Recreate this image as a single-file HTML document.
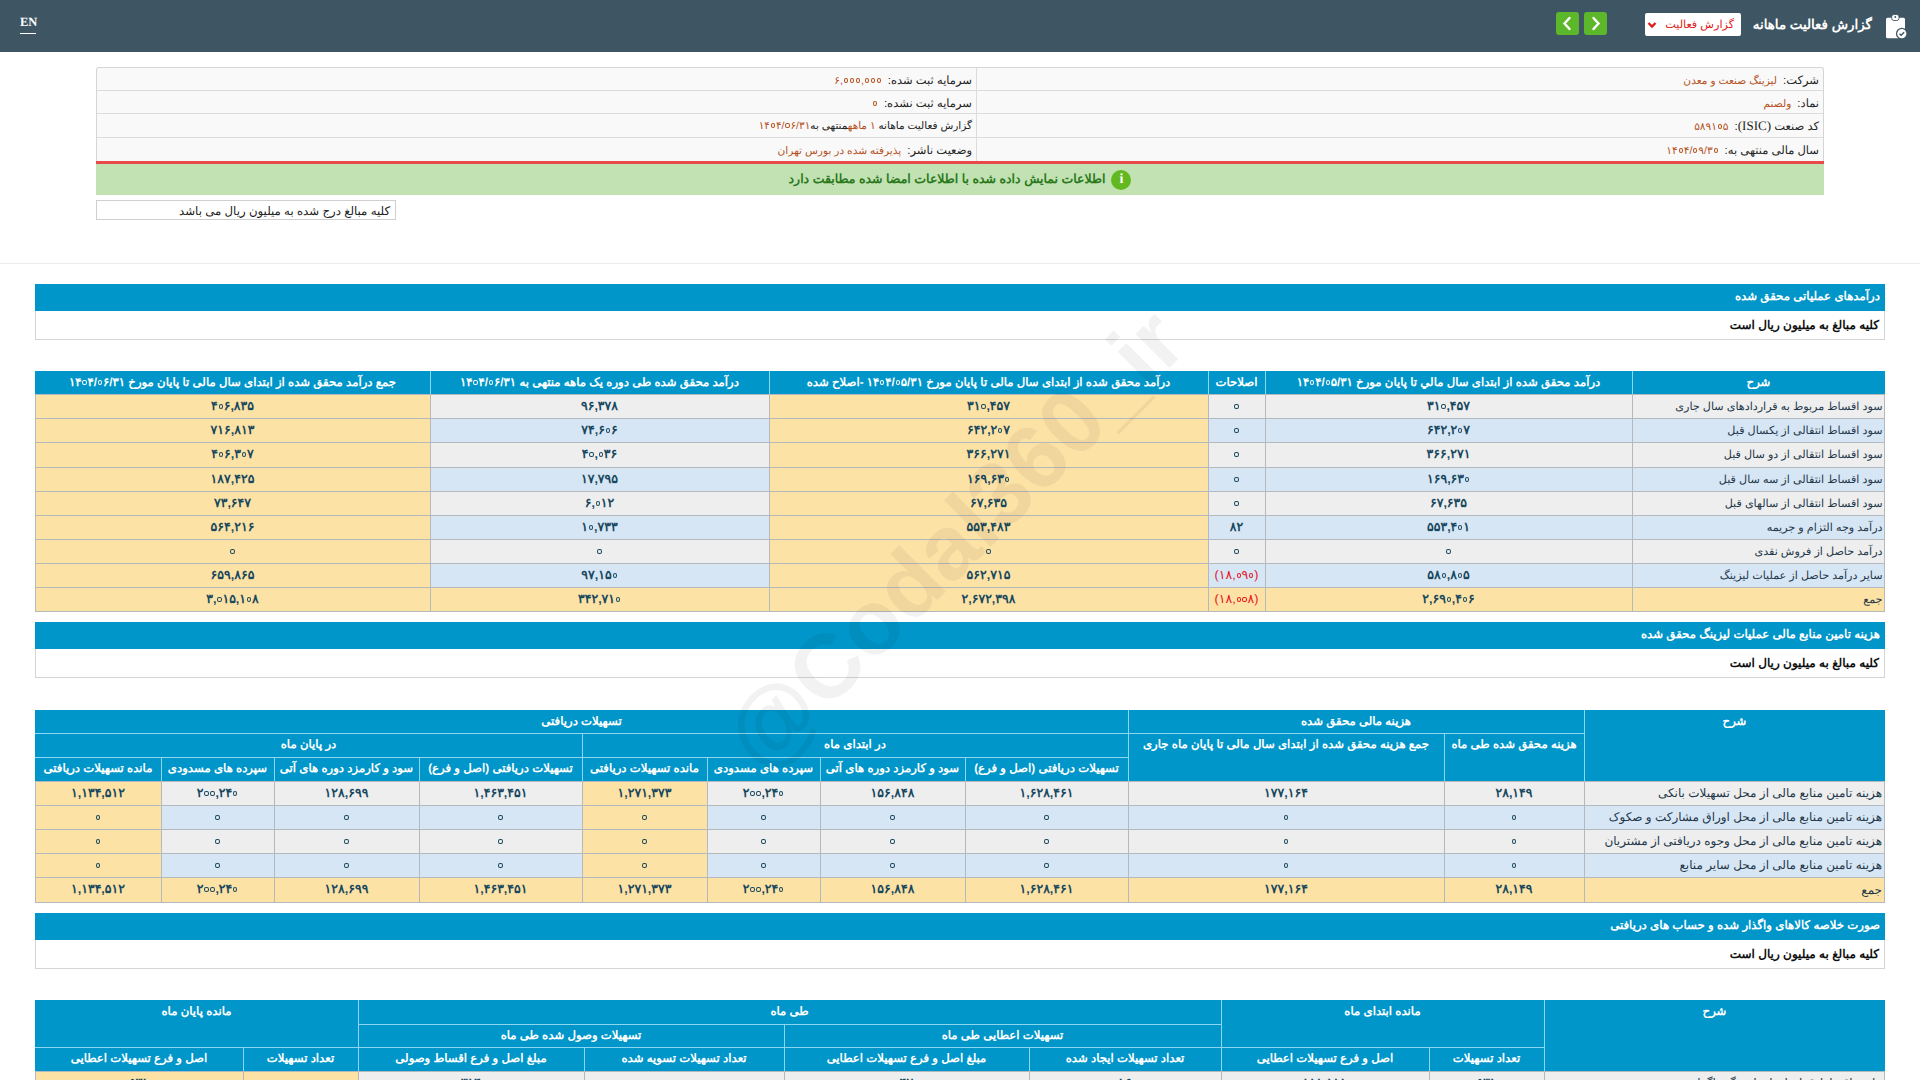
<!DOCTYPE html>
<html lang="fa"><head><meta charset="utf-8"><title>گزارش فعالیت ماهانه</title>
<style>
html,body{margin:0;padding:0;background:#fff;width:1920px;height:1080px;overflow:hidden}
body{position:relative;font-family:"Liberation Sans", sans-serif;}
div{font-family:"Liberation Sans", sans-serif}
*{text-rendering:geometricPrecision}
i.z{display:inline-block;width:4.2px;height:4.6px;border:1.5px solid currentColor;border-radius:50%;box-sizing:border-box;margin:0 0.9px;vertical-align:1.5px}
</style></head><body>
<div style="position:absolute;left:0px;top:0px;width:1920px;height:52px;background:#3e5563"></div>
<div style="position:absolute;left:20px;top:14px;font-family:'Liberation Serif',serif;font-size:12.5px;font-weight:bold;color:#fff;line-height:16px">EN</div>
<div style="position:absolute;left:20px;top:33px;width:16px;height:1px;background:#fff"></div>
<div dir="rtl" style="position:absolute;right:48px;top:14px;font-size:13.4px;font-weight:bold;color:#fff;line-height:22px;white-space:nowrap">گزارش فعالیت ماهانه</div>
<svg style="position:absolute;left:1876px;top:8px" width="40" height="36" viewBox="0 0 40 36">
<rect x="10" y="9.7" width="19" height="20.5" rx="1.5" fill="#fff"/>
<rect x="15.7" y="6.5" width="7.3" height="6" rx="2.2" fill="#fff" stroke="#3e5563" stroke-width="0.9"/><circle cx="19.3" cy="9" r="0.9" fill="#3e5563"/>
<circle cx="25.8" cy="25.7" r="5.9" fill="#3e5563"/><circle cx="25.8" cy="25.7" r="4.6" fill="#fff"/>
<path d="M23.6 25.9 L25.2 27.3 L28.1 24.3" stroke="#3e5563" stroke-width="1.5" fill="none"/>
</svg>
<div style="position:absolute;left:1645px;top:13px;width:96px;height:23px;background:#fff;border-radius:2px"></div>
<div dir="rtl" style="position:absolute;right:186px;top:14px;font-size:11.2px;color:#e01b1b;line-height:23px;white-space:nowrap">گزارش فعالیت</div>
<svg style="position:absolute;left:1647px;top:20px" width="10" height="9" viewBox="0 0 10 9"><path d="M1.5 3 L5 6.5 L8.5 3" stroke="#e01b1b" stroke-width="2.3" fill="none"/></svg>
<div style="position:absolute;left:1556px;top:12px;width:23px;height:23px;background:#5cb82a;border-radius:3px"></div>
<div style="position:absolute;left:1584px;top:12px;width:23px;height:23px;background:#5cb82a;border-radius:3px"></div>
<svg style="position:absolute;left:1556px;top:12px" width="23" height="23" viewBox="0 0 23 23"><path d="M13.5 6 L8.5 11.5 L13.5 17" stroke="#fff" stroke-width="2.4" fill="none" stroke-linecap="round"/></svg>
<svg style="position:absolute;left:1584px;top:12px" width="23" height="23" viewBox="0 0 23 23"><path d="M9.5 6 L14.5 11.5 L9.5 17" stroke="#fff" stroke-width="2.4" fill="none" stroke-linecap="round"/></svg>
<div style="position:absolute;left:96px;top:67px;width:1728px;height:94px;background:#f9f9f9;border:1px solid #d5d5d5;border-bottom:none;box-sizing:border-box;border-radius:3px 3px 0 0"></div>
<div style="position:absolute;left:97px;top:90px;width:1726px;height:1px;background:#dcdcdc"></div>
<div style="position:absolute;left:97px;top:113px;width:1726px;height:1px;background:#dcdcdc"></div>
<div style="position:absolute;left:97px;top:137px;width:1726px;height:1px;background:#dcdcdc"></div>
<div style="position:absolute;left:976px;top:68px;width:1px;height:93px;background:#dcdcdc"></div>
<div dir="rtl" style="position:absolute;right:101px;top:68px;line-height:24px;white-space:nowrap;color:#222"><span style="font-size:11.5px">شرکت:</span><span style="color:#b5501b;font-size:10.6px;margin-right:6px">لیزینگ صنعت و معدن</span></div>
<div dir="rtl" style="position:absolute;right:101px;top:91px;line-height:24px;white-space:nowrap;color:#222"><span style="font-size:11.5px">نماد:</span><span style="color:#b5501b;font-size:10.6px;margin-right:6px">ولصنم</span></div>
<div dir="rtl" style="position:absolute;right:101px;top:114px;line-height:24px;white-space:nowrap;color:#222"><span style="font-size:11.5px">کد صنعت <span style="font-family:Liberation Serif,serif;font-size:13px">(ISIC)</span>:</span><span style="color:#b5501b;font-size:10.6px;margin-right:6px"><bdi dir="ltr">۵۸۹۱<i class="z"></i>۵</bdi></span></div>
<div dir="rtl" style="position:absolute;right:101px;top:138px;line-height:24px;white-space:nowrap;color:#222"><span style="font-size:11.5px">سال مالی منتهی به:</span><span style="color:#b5501b;font-size:10.6px;margin-right:6px"><bdi dir="ltr">۱۴<i class="z"></i>۴/<i class="z"></i>۹/۳<i class="z"></i></bdi></span></div>
<div dir="rtl" style="position:absolute;right:948px;top:68px;line-height:24px;white-space:nowrap;color:#222"><span style="font-size:11.5px">سرمایه ثبت شده:</span><span style="color:#b5501b;font-size:10.6px;margin-right:6px"><bdi dir="ltr">۶,<i class="z"></i><i class="z"></i><i class="z"></i>,<i class="z"></i><i class="z"></i><i class="z"></i></bdi></span></div>
<div dir="rtl" style="position:absolute;right:948px;top:91px;line-height:24px;white-space:nowrap;color:#222"><span style="font-size:11.5px">سرمایه ثبت نشده:</span><span style="color:#b5501b;font-size:10.6px;margin-right:6px"><bdi dir="ltr"><i class="z"></i></bdi></span></div>
<div dir="rtl" style="position:absolute;right:948px;top:114px;line-height:24px;font-size:10.5px;white-space:nowrap;color:#222"><span>گزارش فعالیت ماهانه </span><span style="color:#b5501b">۱ ماهه</span><span>منتهی به</span><span style="color:#b5501b"><bdi dir="ltr">۱۴<i class="z"></i>۴/<i class="z"></i>۶/۳۱</bdi></span></div>
<div dir="rtl" style="position:absolute;right:948px;top:138px;line-height:24px;white-space:nowrap;color:#222"><span style="font-size:11.5px">وضعیت ناشر:</span><span style="color:#b5501b;font-size:10.6px;margin-right:6px">پذیرفته شده در بورس تهران</span></div>
<div style="position:absolute;left:96px;top:161px;width:1728px;height:3px;background:#e84a4a"></div>
<div style="position:absolute;left:96px;top:164px;width:1728px;height:31px;background:#c3e2b4"></div>
<div dir="rtl" style="position:absolute;left:0;width:1920px;top:164px;text-align:center;line-height:30px;font-size:12.5px;font-weight:bold;color:#2a7a1c;white-space:nowrap"><span style="display:inline-block;width:20px;height:20px;border-radius:50%;background:#62b81f;color:#fff;font-weight:bold;font-size:14px;line-height:20px;vertical-align:middle;margin-left:6px;font-family:'Liberation Serif',serif">i</span>اطلاعات نمایش داده شده با اطلاعات امضا شده مطابقت دارد</div>
<div style="position:absolute;left:96px;top:200px;width:300px;height:20px;background:#fff;border:1px solid #cfcfcf;box-sizing:border-box"></div>
<div dir="rtl" style="position:absolute;right:1530px;top:202px;line-height:19px;font-size:11.75px;color:#222;white-space:nowrap">کلیه مبالغ درج شده به میلیون ریال می باشد</div>
<div style="position:absolute;left:0px;top:263px;width:1920px;height:1px;background:#ececec"></div>
<div style="position:absolute;left:35px;top:284px;width:1850px;height:27px;background:#0096c9"></div>
<div dir="rtl" style="position:absolute;right:40px;top:283px;line-height:27px;font-size:11.75px;font-weight:bold;color:#fff;white-space:nowrap">درآمدهای عملیاتی محقق شده</div>
<div style="position:absolute;left:35px;top:311px;width:1850px;height:29px;background:#fff;border:1px solid #d5d5d5;border-top:none;box-sizing:border-box"></div>
<div dir="rtl" style="position:absolute;right:41px;top:311px;line-height:29px;font-size:12px;font-weight:bold;color:#111;white-space:nowrap">کلیه مبالغ به میلیون ریال است</div>
<div style="position:absolute;left:35px;top:622px;width:1850px;height:27px;background:#0096c9"></div>
<div dir="rtl" style="position:absolute;right:40px;top:621px;line-height:27px;font-size:11.75px;font-weight:bold;color:#fff;white-space:nowrap">هزینه تامین منابع مالی عملیات لیزینگ محقق شده</div>
<div style="position:absolute;left:35px;top:649px;width:1850px;height:29px;background:#fff;border:1px solid #d5d5d5;border-top:none;box-sizing:border-box"></div>
<div dir="rtl" style="position:absolute;right:41px;top:649px;line-height:29px;font-size:12px;font-weight:bold;color:#111;white-space:nowrap">کلیه مبالغ به میلیون ریال است</div>
<div style="position:absolute;left:35px;top:913px;width:1850px;height:27px;background:#0096c9"></div>
<div dir="rtl" style="position:absolute;right:40px;top:912px;line-height:27px;font-size:11.75px;font-weight:bold;color:#fff;white-space:nowrap">صورت خلاصه کالاهای واگذار شده و حساب های دریافتی</div>
<div style="position:absolute;left:35px;top:940px;width:1850px;height:29px;background:#fff;border:1px solid #d5d5d5;border-top:none;box-sizing:border-box"></div>
<div dir="rtl" style="position:absolute;right:41px;top:940px;line-height:29px;font-size:12px;font-weight:bold;color:#111;white-space:nowrap">کلیه مبالغ به میلیون ریال است</div>
<div style="position:absolute;left:35px;top:371px;width:395px;height:23px;background:#0096c9;text-align:center;box-sizing:border-box;line-height:23px;font-size:11.7px;font-weight:bold;color:#fff;white-space:nowrap;overflow:hidden;direction:rtl">جمع درآمد محقق شده از ابتدای سال مالی تا پایان مورخ <bdi dir="ltr">۱۴<i class="z"></i>۴/<i class="z"></i>۶/۳۱</bdi></div>
<div style="position:absolute;left:430px;top:371px;width:339px;height:23px;background:#0096c9;text-align:center;box-sizing:border-box;line-height:23px;font-size:11.7px;font-weight:bold;color:#fff;white-space:nowrap;overflow:hidden;direction:rtl">درآمد محقق شده طی دوره یک ماهه منتهی به <bdi dir="ltr">۱۴<i class="z"></i>۴/<i class="z"></i>۶/۳۱</bdi></div>
<div style="position:absolute;left:769px;top:371px;width:439px;height:23px;background:#0096c9;text-align:center;box-sizing:border-box;line-height:23px;font-size:11.7px;font-weight:bold;color:#fff;white-space:nowrap;overflow:hidden;direction:rtl">درآمد محقق شده از ابتدای سال مالی تا پایان مورخ <bdi dir="ltr">۱۴<i class="z"></i>۴/<i class="z"></i>۵/۳۱</bdi> -اصلاح شده</div>
<div style="position:absolute;left:1208px;top:371px;width:57px;height:23px;background:#0096c9;text-align:center;box-sizing:border-box;line-height:23px;font-size:11.7px;font-weight:bold;color:#fff;white-space:nowrap;overflow:hidden;direction:rtl">اصلاحات</div>
<div style="position:absolute;left:1265px;top:371px;width:367px;height:23px;background:#0096c9;text-align:center;box-sizing:border-box;line-height:23px;font-size:11.7px;font-weight:bold;color:#fff;white-space:nowrap;overflow:hidden;direction:rtl">درآمد محقق شده از ابتدای سال مالي تا پایان مورخ <bdi dir="ltr">۱۴<i class="z"></i>۴/<i class="z"></i>۵/۳۱</bdi></div>
<div style="position:absolute;left:1632px;top:371px;width:253px;height:23px;background:#0096c9;text-align:center;box-sizing:border-box;line-height:23px;font-size:11.7px;font-weight:bold;color:#fff;white-space:nowrap;overflow:hidden;direction:rtl">شرح</div>
<div style="position:absolute;left:35px;top:394px;width:395px;height:24px;background:#fde2a5;text-align:center;box-sizing:border-box;line-height:24px;font-size:12.5px;font-weight:bold;color:#18485e;white-space:nowrap;overflow:hidden;">۴<i class="z"></i>۶,۸۳۵</div>
<div style="position:absolute;left:430px;top:394px;width:339px;height:24px;background:#eeeeee;text-align:center;box-sizing:border-box;line-height:24px;font-size:12.5px;font-weight:bold;color:#18485e;white-space:nowrap;overflow:hidden;">۹۶,۳۷۸</div>
<div style="position:absolute;left:769px;top:394px;width:439px;height:24px;background:#fde2a5;text-align:center;box-sizing:border-box;line-height:24px;font-size:12.5px;font-weight:bold;color:#18485e;white-space:nowrap;overflow:hidden;">۳۱<i class="z"></i>,۴۵۷</div>
<div style="position:absolute;left:1208px;top:394px;width:57px;height:24px;background:#eeeeee;text-align:center;box-sizing:border-box;line-height:24px;font-size:12.5px;font-weight:bold;color:#18485e;white-space:nowrap;overflow:hidden;"><i class="z"></i></div>
<div style="position:absolute;left:1265px;top:394px;width:367px;height:24px;background:#eeeeee;text-align:center;box-sizing:border-box;line-height:24px;font-size:12.5px;font-weight:bold;color:#18485e;white-space:nowrap;overflow:hidden;">۳۱<i class="z"></i>,۴۵۷</div>
<div style="position:absolute;left:1632px;top:394px;width:253px;height:24px;background:#eeeeee;text-align:right;padding-right:2.5px;box-sizing:border-box;line-height:26px;font-size:11.15px;font-weight:normal;color:#24384a;white-space:nowrap;overflow:hidden;direction:rtl">سود اقساط مربوط به قراردادهای سال جاری</div>
<div style="position:absolute;left:35px;top:418px;width:395px;height:24px;background:#fde2a5;text-align:center;box-sizing:border-box;line-height:24px;font-size:12.5px;font-weight:bold;color:#18485e;white-space:nowrap;overflow:hidden;">۷۱۶,۸۱۳</div>
<div style="position:absolute;left:430px;top:418px;width:339px;height:24px;background:#d7e6f5;text-align:center;box-sizing:border-box;line-height:24px;font-size:12.5px;font-weight:bold;color:#18485e;white-space:nowrap;overflow:hidden;">۷۴,۶<i class="z"></i>۶</div>
<div style="position:absolute;left:769px;top:418px;width:439px;height:24px;background:#fde2a5;text-align:center;box-sizing:border-box;line-height:24px;font-size:12.5px;font-weight:bold;color:#18485e;white-space:nowrap;overflow:hidden;">۶۴۲,۲<i class="z"></i>۷</div>
<div style="position:absolute;left:1208px;top:418px;width:57px;height:24px;background:#d7e6f5;text-align:center;box-sizing:border-box;line-height:24px;font-size:12.5px;font-weight:bold;color:#18485e;white-space:nowrap;overflow:hidden;"><i class="z"></i></div>
<div style="position:absolute;left:1265px;top:418px;width:367px;height:24px;background:#d7e6f5;text-align:center;box-sizing:border-box;line-height:24px;font-size:12.5px;font-weight:bold;color:#18485e;white-space:nowrap;overflow:hidden;">۶۴۲,۲<i class="z"></i>۷</div>
<div style="position:absolute;left:1632px;top:418px;width:253px;height:24px;background:#d7e6f5;text-align:right;padding-right:2.5px;box-sizing:border-box;line-height:26px;font-size:11.15px;font-weight:normal;color:#24384a;white-space:nowrap;overflow:hidden;direction:rtl">سود اقساط انتقالی از یکسال قبل</div>
<div style="position:absolute;left:35px;top:442px;width:395px;height:25px;background:#fde2a5;text-align:center;box-sizing:border-box;line-height:25px;font-size:12.5px;font-weight:bold;color:#18485e;white-space:nowrap;overflow:hidden;">۴<i class="z"></i>۶,۳<i class="z"></i>۷</div>
<div style="position:absolute;left:430px;top:442px;width:339px;height:25px;background:#eeeeee;text-align:center;box-sizing:border-box;line-height:25px;font-size:12.5px;font-weight:bold;color:#18485e;white-space:nowrap;overflow:hidden;">۴<i class="z"></i>,<i class="z"></i>۳۶</div>
<div style="position:absolute;left:769px;top:442px;width:439px;height:25px;background:#fde2a5;text-align:center;box-sizing:border-box;line-height:25px;font-size:12.5px;font-weight:bold;color:#18485e;white-space:nowrap;overflow:hidden;">۳۶۶,۲۷۱</div>
<div style="position:absolute;left:1208px;top:442px;width:57px;height:25px;background:#eeeeee;text-align:center;box-sizing:border-box;line-height:25px;font-size:12.5px;font-weight:bold;color:#18485e;white-space:nowrap;overflow:hidden;"><i class="z"></i></div>
<div style="position:absolute;left:1265px;top:442px;width:367px;height:25px;background:#eeeeee;text-align:center;box-sizing:border-box;line-height:25px;font-size:12.5px;font-weight:bold;color:#18485e;white-space:nowrap;overflow:hidden;">۳۶۶,۲۷۱</div>
<div style="position:absolute;left:1632px;top:442px;width:253px;height:25px;background:#eeeeee;text-align:right;padding-right:2.5px;box-sizing:border-box;line-height:27px;font-size:11.15px;font-weight:normal;color:#24384a;white-space:nowrap;overflow:hidden;direction:rtl">سود اقساط انتقالی از دو سال قبل</div>
<div style="position:absolute;left:35px;top:467px;width:395px;height:24px;background:#fde2a5;text-align:center;box-sizing:border-box;line-height:24px;font-size:12.5px;font-weight:bold;color:#18485e;white-space:nowrap;overflow:hidden;">۱۸۷,۴۲۵</div>
<div style="position:absolute;left:430px;top:467px;width:339px;height:24px;background:#d7e6f5;text-align:center;box-sizing:border-box;line-height:24px;font-size:12.5px;font-weight:bold;color:#18485e;white-space:nowrap;overflow:hidden;">۱۷,۷۹۵</div>
<div style="position:absolute;left:769px;top:467px;width:439px;height:24px;background:#fde2a5;text-align:center;box-sizing:border-box;line-height:24px;font-size:12.5px;font-weight:bold;color:#18485e;white-space:nowrap;overflow:hidden;">۱۶۹,۶۳<i class="z"></i></div>
<div style="position:absolute;left:1208px;top:467px;width:57px;height:24px;background:#d7e6f5;text-align:center;box-sizing:border-box;line-height:24px;font-size:12.5px;font-weight:bold;color:#18485e;white-space:nowrap;overflow:hidden;"><i class="z"></i></div>
<div style="position:absolute;left:1265px;top:467px;width:367px;height:24px;background:#d7e6f5;text-align:center;box-sizing:border-box;line-height:24px;font-size:12.5px;font-weight:bold;color:#18485e;white-space:nowrap;overflow:hidden;">۱۶۹,۶۳<i class="z"></i></div>
<div style="position:absolute;left:1632px;top:467px;width:253px;height:24px;background:#d7e6f5;text-align:right;padding-right:2.5px;box-sizing:border-box;line-height:26px;font-size:11.15px;font-weight:normal;color:#24384a;white-space:nowrap;overflow:hidden;direction:rtl">سود اقساط انتقالی از سه سال قبل</div>
<div style="position:absolute;left:35px;top:491px;width:395px;height:24px;background:#fde2a5;text-align:center;box-sizing:border-box;line-height:24px;font-size:12.5px;font-weight:bold;color:#18485e;white-space:nowrap;overflow:hidden;">۷۳,۶۴۷</div>
<div style="position:absolute;left:430px;top:491px;width:339px;height:24px;background:#eeeeee;text-align:center;box-sizing:border-box;line-height:24px;font-size:12.5px;font-weight:bold;color:#18485e;white-space:nowrap;overflow:hidden;">۶,<i class="z"></i>۱۲</div>
<div style="position:absolute;left:769px;top:491px;width:439px;height:24px;background:#fde2a5;text-align:center;box-sizing:border-box;line-height:24px;font-size:12.5px;font-weight:bold;color:#18485e;white-space:nowrap;overflow:hidden;">۶۷,۶۳۵</div>
<div style="position:absolute;left:1208px;top:491px;width:57px;height:24px;background:#eeeeee;text-align:center;box-sizing:border-box;line-height:24px;font-size:12.5px;font-weight:bold;color:#18485e;white-space:nowrap;overflow:hidden;"><i class="z"></i></div>
<div style="position:absolute;left:1265px;top:491px;width:367px;height:24px;background:#eeeeee;text-align:center;box-sizing:border-box;line-height:24px;font-size:12.5px;font-weight:bold;color:#18485e;white-space:nowrap;overflow:hidden;">۶۷,۶۳۵</div>
<div style="position:absolute;left:1632px;top:491px;width:253px;height:24px;background:#eeeeee;text-align:right;padding-right:2.5px;box-sizing:border-box;line-height:26px;font-size:11.15px;font-weight:normal;color:#24384a;white-space:nowrap;overflow:hidden;direction:rtl">سود اقساط انتقالی از سالهای قبل</div>
<div style="position:absolute;left:35px;top:515px;width:395px;height:24px;background:#fde2a5;text-align:center;box-sizing:border-box;line-height:24px;font-size:12.5px;font-weight:bold;color:#18485e;white-space:nowrap;overflow:hidden;">۵۶۴,۲۱۶</div>
<div style="position:absolute;left:430px;top:515px;width:339px;height:24px;background:#d7e6f5;text-align:center;box-sizing:border-box;line-height:24px;font-size:12.5px;font-weight:bold;color:#18485e;white-space:nowrap;overflow:hidden;">۱<i class="z"></i>,۷۳۳</div>
<div style="position:absolute;left:769px;top:515px;width:439px;height:24px;background:#fde2a5;text-align:center;box-sizing:border-box;line-height:24px;font-size:12.5px;font-weight:bold;color:#18485e;white-space:nowrap;overflow:hidden;">۵۵۳,۴۸۳</div>
<div style="position:absolute;left:1208px;top:515px;width:57px;height:24px;background:#d7e6f5;text-align:center;box-sizing:border-box;line-height:24px;font-size:12.5px;font-weight:bold;color:#18485e;white-space:nowrap;overflow:hidden;">۸۲</div>
<div style="position:absolute;left:1265px;top:515px;width:367px;height:24px;background:#d7e6f5;text-align:center;box-sizing:border-box;line-height:24px;font-size:12.5px;font-weight:bold;color:#18485e;white-space:nowrap;overflow:hidden;">۵۵۳,۴<i class="z"></i>۱</div>
<div style="position:absolute;left:1632px;top:515px;width:253px;height:24px;background:#d7e6f5;text-align:right;padding-right:2.5px;box-sizing:border-box;line-height:26px;font-size:11.15px;font-weight:normal;color:#24384a;white-space:nowrap;overflow:hidden;direction:rtl">درآمد وجه التزام و جریمه</div>
<div style="position:absolute;left:35px;top:539px;width:395px;height:24px;background:#fde2a5;text-align:center;box-sizing:border-box;line-height:24px;font-size:12.5px;font-weight:bold;color:#18485e;white-space:nowrap;overflow:hidden;"><i class="z"></i></div>
<div style="position:absolute;left:430px;top:539px;width:339px;height:24px;background:#eeeeee;text-align:center;box-sizing:border-box;line-height:24px;font-size:12.5px;font-weight:bold;color:#18485e;white-space:nowrap;overflow:hidden;"><i class="z"></i></div>
<div style="position:absolute;left:769px;top:539px;width:439px;height:24px;background:#fde2a5;text-align:center;box-sizing:border-box;line-height:24px;font-size:12.5px;font-weight:bold;color:#18485e;white-space:nowrap;overflow:hidden;"><i class="z"></i></div>
<div style="position:absolute;left:1208px;top:539px;width:57px;height:24px;background:#eeeeee;text-align:center;box-sizing:border-box;line-height:24px;font-size:12.5px;font-weight:bold;color:#18485e;white-space:nowrap;overflow:hidden;"><i class="z"></i></div>
<div style="position:absolute;left:1265px;top:539px;width:367px;height:24px;background:#eeeeee;text-align:center;box-sizing:border-box;line-height:24px;font-size:12.5px;font-weight:bold;color:#18485e;white-space:nowrap;overflow:hidden;"><i class="z"></i></div>
<div style="position:absolute;left:1632px;top:539px;width:253px;height:24px;background:#eeeeee;text-align:right;padding-right:2.5px;box-sizing:border-box;line-height:26px;font-size:11.15px;font-weight:normal;color:#24384a;white-space:nowrap;overflow:hidden;direction:rtl">درآمد حاصل از فروش نقدی</div>
<div style="position:absolute;left:35px;top:563px;width:395px;height:24px;background:#fde2a5;text-align:center;box-sizing:border-box;line-height:24px;font-size:12.5px;font-weight:bold;color:#18485e;white-space:nowrap;overflow:hidden;">۶۵۹,۸۶۵</div>
<div style="position:absolute;left:430px;top:563px;width:339px;height:24px;background:#d7e6f5;text-align:center;box-sizing:border-box;line-height:24px;font-size:12.5px;font-weight:bold;color:#18485e;white-space:nowrap;overflow:hidden;">۹۷,۱۵<i class="z"></i></div>
<div style="position:absolute;left:769px;top:563px;width:439px;height:24px;background:#fde2a5;text-align:center;box-sizing:border-box;line-height:24px;font-size:12.5px;font-weight:bold;color:#18485e;white-space:nowrap;overflow:hidden;">۵۶۲,۷۱۵</div>
<div style="position:absolute;left:1208px;top:563px;width:57px;height:24px;background:#d7e6f5;text-align:center;box-sizing:border-box;line-height:24px;font-size:12.5px;font-weight:normal;color:#e8141e;white-space:nowrap;overflow:hidden;">(۱۸,<i class="z"></i>۹<i class="z"></i>)</div>
<div style="position:absolute;left:1265px;top:563px;width:367px;height:24px;background:#d7e6f5;text-align:center;box-sizing:border-box;line-height:24px;font-size:12.5px;font-weight:bold;color:#18485e;white-space:nowrap;overflow:hidden;">۵۸<i class="z"></i>,۸<i class="z"></i>۵</div>
<div style="position:absolute;left:1632px;top:563px;width:253px;height:24px;background:#d7e6f5;text-align:right;padding-right:2.5px;box-sizing:border-box;line-height:26px;font-size:11.15px;font-weight:normal;color:#24384a;white-space:nowrap;overflow:hidden;direction:rtl">سایر درآمد حاصل از عملیات لیزینگ</div>
<div style="position:absolute;left:35px;top:587px;width:395px;height:24px;background:#fde2a5;text-align:center;box-sizing:border-box;line-height:24px;font-size:12.5px;font-weight:bold;color:#18485e;white-space:nowrap;overflow:hidden;">۳,<i class="z"></i>۱۵,۱<i class="z"></i>۸</div>
<div style="position:absolute;left:430px;top:587px;width:339px;height:24px;background:#fde2a5;text-align:center;box-sizing:border-box;line-height:24px;font-size:12.5px;font-weight:bold;color:#18485e;white-space:nowrap;overflow:hidden;">۳۴۲,۷۱<i class="z"></i></div>
<div style="position:absolute;left:769px;top:587px;width:439px;height:24px;background:#fde2a5;text-align:center;box-sizing:border-box;line-height:24px;font-size:12.5px;font-weight:bold;color:#18485e;white-space:nowrap;overflow:hidden;">۲,۶۷۲,۳۹۸</div>
<div style="position:absolute;left:1208px;top:587px;width:57px;height:24px;background:#fde2a5;text-align:center;box-sizing:border-box;line-height:24px;font-size:12.5px;font-weight:normal;color:#e8141e;white-space:nowrap;overflow:hidden;">(۱۸,<i class="z"></i><i class="z"></i>۸)</div>
<div style="position:absolute;left:1265px;top:587px;width:367px;height:24px;background:#fde2a5;text-align:center;box-sizing:border-box;line-height:24px;font-size:12.5px;font-weight:bold;color:#18485e;white-space:nowrap;overflow:hidden;">۲,۶۹<i class="z"></i>,۴<i class="z"></i>۶</div>
<div style="position:absolute;left:1632px;top:587px;width:253px;height:24px;background:#fde2a5;text-align:right;padding-right:2.5px;box-sizing:border-box;line-height:26px;font-size:11.15px;font-weight:normal;color:#24384a;white-space:nowrap;overflow:hidden;direction:rtl">جمع</div>
<div style="position:absolute;left:35px;top:394px;width:1850px;height:1px;background:#b4b9bd"></div>
<div style="position:absolute;left:35px;top:418px;width:1850px;height:1px;background:#b4b9bd"></div>
<div style="position:absolute;left:35px;top:442px;width:1850px;height:1px;background:#b4b9bd"></div>
<div style="position:absolute;left:35px;top:467px;width:1850px;height:1px;background:#b4b9bd"></div>
<div style="position:absolute;left:35px;top:491px;width:1850px;height:1px;background:#b4b9bd"></div>
<div style="position:absolute;left:35px;top:515px;width:1850px;height:1px;background:#b4b9bd"></div>
<div style="position:absolute;left:35px;top:539px;width:1850px;height:1px;background:#b4b9bd"></div>
<div style="position:absolute;left:35px;top:563px;width:1850px;height:1px;background:#b4b9bd"></div>
<div style="position:absolute;left:35px;top:587px;width:1850px;height:1px;background:#b4b9bd"></div>
<div style="position:absolute;left:35px;top:611px;width:1850px;height:1px;background:#b4b9bd"></div>
<div style="position:absolute;left:430px;top:394px;width:1px;height:217px;background:#b4b9bd"></div>
<div style="position:absolute;left:430px;top:371px;width:1px;height:23px;background:#8cd6f2"></div>
<div style="position:absolute;left:769px;top:394px;width:1px;height:217px;background:#b4b9bd"></div>
<div style="position:absolute;left:769px;top:371px;width:1px;height:23px;background:#8cd6f2"></div>
<div style="position:absolute;left:1208px;top:394px;width:1px;height:217px;background:#b4b9bd"></div>
<div style="position:absolute;left:1208px;top:371px;width:1px;height:23px;background:#8cd6f2"></div>
<div style="position:absolute;left:1265px;top:394px;width:1px;height:217px;background:#b4b9bd"></div>
<div style="position:absolute;left:1265px;top:371px;width:1px;height:23px;background:#8cd6f2"></div>
<div style="position:absolute;left:1632px;top:394px;width:1px;height:217px;background:#b4b9bd"></div>
<div style="position:absolute;left:1632px;top:371px;width:1px;height:23px;background:#8cd6f2"></div>
<div style="position:absolute;left:35px;top:394px;width:1px;height:218px;background:#b4b9bd"></div>
<div style="position:absolute;left:1884px;top:394px;width:1px;height:218px;background:#b4b9bd"></div>
<div style="position:absolute;left:1584px;top:710px;width:301px;height:71px;background:#0096c9;text-align:center;box-sizing:border-box;line-height:71px;font-size:11px;font-weight:normal;color:#fff;white-space:nowrap;overflow:hidden;"></div>
<div dir="rtl" style="position:absolute;left:1584px;width:301px;top:710px;line-height:23px;text-align:center;font-size:11.7px;font-weight:bold;color:#fff">شرح</div>
<div style="position:absolute;left:1128px;top:710px;width:456px;height:23px;background:#0096c9;text-align:center;box-sizing:border-box;line-height:23px;font-size:11.7px;font-weight:bold;color:#fff;white-space:nowrap;overflow:hidden;">هزینه مالی محقق شده</div>
<div style="position:absolute;left:1444px;top:733px;width:140px;height:48px;background:#0096c9;text-align:center;box-sizing:border-box;line-height:48px;font-size:11px;font-weight:normal;color:#fff;white-space:nowrap;overflow:hidden;"></div>
<div dir="rtl" style="position:absolute;left:1444px;width:140px;top:733px;line-height:23px;text-align:center;font-size:11.7px;font-weight:bold;color:#fff">هزینه محقق شده طی ماه</div>
<div style="position:absolute;left:1128px;top:733px;width:316px;height:48px;background:#0096c9;text-align:center;box-sizing:border-box;line-height:48px;font-size:11px;font-weight:normal;color:#fff;white-space:nowrap;overflow:hidden;"></div>
<div dir="rtl" style="position:absolute;left:1128px;width:316px;top:733px;line-height:23px;text-align:center;font-size:11.7px;font-weight:bold;color:#fff">جمع هزینه محقق شده از ابتدای سال مالی تا پایان ماه جاری</div>
<div style="position:absolute;left:35px;top:710px;width:1093px;height:23px;background:#0096c9;text-align:center;box-sizing:border-box;line-height:23px;font-size:11.7px;font-weight:bold;color:#fff;white-space:nowrap;overflow:hidden;">تسهیلات دریافتی</div>
<div style="position:absolute;left:582px;top:733px;width:546px;height:24px;background:#0096c9;text-align:center;box-sizing:border-box;line-height:24px;font-size:11.7px;font-weight:bold;color:#fff;white-space:nowrap;overflow:hidden;">در ابتدای ماه</div>
<div style="position:absolute;left:35px;top:733px;width:547px;height:24px;background:#0096c9;text-align:center;box-sizing:border-box;line-height:24px;font-size:11.7px;font-weight:bold;color:#fff;white-space:nowrap;overflow:hidden;">در پایان ماه</div>
<div style="position:absolute;left:35px;top:757px;width:126px;height:24px;background:#0096c9;text-align:center;box-sizing:border-box;line-height:24px;font-size:11.7px;font-weight:bold;color:#fff;white-space:nowrap;overflow:hidden;">مانده تسهیلات دریافتی</div>
<div style="position:absolute;left:161px;top:757px;width:113px;height:24px;background:#0096c9;text-align:center;box-sizing:border-box;line-height:24px;font-size:11.7px;font-weight:bold;color:#fff;white-space:nowrap;overflow:hidden;">سپرده های مسدودی</div>
<div style="position:absolute;left:274px;top:757px;width:145px;height:24px;background:#0096c9;text-align:center;box-sizing:border-box;line-height:24px;font-size:11.7px;font-weight:bold;color:#fff;white-space:nowrap;overflow:hidden;">سود و کارمزد دوره های آتی</div>
<div style="position:absolute;left:419px;top:757px;width:163px;height:24px;background:#0096c9;text-align:center;box-sizing:border-box;line-height:24px;font-size:11.7px;font-weight:bold;color:#fff;white-space:nowrap;overflow:hidden;">تسهیلات دریافتی (اصل و فرع)</div>
<div style="position:absolute;left:582px;top:757px;width:125px;height:24px;background:#0096c9;text-align:center;box-sizing:border-box;line-height:24px;font-size:11.7px;font-weight:bold;color:#fff;white-space:nowrap;overflow:hidden;">مانده تسهیلات دریافتی</div>
<div style="position:absolute;left:707px;top:757px;width:113px;height:24px;background:#0096c9;text-align:center;box-sizing:border-box;line-height:24px;font-size:11.7px;font-weight:bold;color:#fff;white-space:nowrap;overflow:hidden;">سپرده های مسدودی</div>
<div style="position:absolute;left:820px;top:757px;width:145px;height:24px;background:#0096c9;text-align:center;box-sizing:border-box;line-height:24px;font-size:11.7px;font-weight:bold;color:#fff;white-space:nowrap;overflow:hidden;">سود و کارمزد دوره های آتی</div>
<div style="position:absolute;left:965px;top:757px;width:163px;height:24px;background:#0096c9;text-align:center;box-sizing:border-box;line-height:24px;font-size:11.7px;font-weight:bold;color:#fff;white-space:nowrap;overflow:hidden;">تسهیلات دریافتی (اصل و فرع)</div>
<div style="position:absolute;left:35px;top:733px;width:1093px;height:1px;background:#8cd6f2"></div>
<div style="position:absolute;left:35px;top:757px;width:1093px;height:1px;background:#8cd6f2"></div>
<div style="position:absolute;left:1128px;top:733px;width:456px;height:1px;background:#8cd6f2"></div>
<div style="position:absolute;left:1584px;top:710px;width:1px;height:71px;background:#8cd6f2"></div>
<div style="position:absolute;left:1444px;top:733px;width:1px;height:48px;background:#8cd6f2"></div>
<div style="position:absolute;left:1128px;top:710px;width:1px;height:71px;background:#8cd6f2"></div>
<div style="position:absolute;left:582px;top:733px;width:1px;height:48px;background:#8cd6f2"></div>
<div style="position:absolute;left:161px;top:757px;width:1px;height:24px;background:#8cd6f2"></div>
<div style="position:absolute;left:274px;top:757px;width:1px;height:24px;background:#8cd6f2"></div>
<div style="position:absolute;left:419px;top:757px;width:1px;height:24px;background:#8cd6f2"></div>
<div style="position:absolute;left:582px;top:757px;width:1px;height:24px;background:#8cd6f2"></div>
<div style="position:absolute;left:707px;top:757px;width:1px;height:24px;background:#8cd6f2"></div>
<div style="position:absolute;left:820px;top:757px;width:1px;height:24px;background:#8cd6f2"></div>
<div style="position:absolute;left:965px;top:757px;width:1px;height:24px;background:#8cd6f2"></div>
<div style="position:absolute;left:35px;top:781px;width:126px;height:24px;background:#fde2a5;text-align:center;box-sizing:border-box;line-height:24px;font-size:12.5px;font-weight:bold;color:#18485e;white-space:nowrap;overflow:hidden;">۱,۱۳۴,۵۱۲</div>
<div style="position:absolute;left:161px;top:781px;width:113px;height:24px;background:#eeeeee;text-align:center;box-sizing:border-box;line-height:24px;font-size:12.5px;font-weight:bold;color:#18485e;white-space:nowrap;overflow:hidden;">۲<i class="z"></i><i class="z"></i>,۲۴<i class="z"></i></div>
<div style="position:absolute;left:274px;top:781px;width:145px;height:24px;background:#eeeeee;text-align:center;box-sizing:border-box;line-height:24px;font-size:12.5px;font-weight:bold;color:#18485e;white-space:nowrap;overflow:hidden;">۱۲۸,۶۹۹</div>
<div style="position:absolute;left:419px;top:781px;width:163px;height:24px;background:#eeeeee;text-align:center;box-sizing:border-box;line-height:24px;font-size:12.5px;font-weight:bold;color:#18485e;white-space:nowrap;overflow:hidden;">۱,۴۶۳,۴۵۱</div>
<div style="position:absolute;left:582px;top:781px;width:125px;height:24px;background:#fde2a5;text-align:center;box-sizing:border-box;line-height:24px;font-size:12.5px;font-weight:bold;color:#18485e;white-space:nowrap;overflow:hidden;">۱,۲۷۱,۳۷۳</div>
<div style="position:absolute;left:707px;top:781px;width:113px;height:24px;background:#eeeeee;text-align:center;box-sizing:border-box;line-height:24px;font-size:12.5px;font-weight:bold;color:#18485e;white-space:nowrap;overflow:hidden;">۲<i class="z"></i><i class="z"></i>,۲۴<i class="z"></i></div>
<div style="position:absolute;left:820px;top:781px;width:145px;height:24px;background:#eeeeee;text-align:center;box-sizing:border-box;line-height:24px;font-size:12.5px;font-weight:bold;color:#18485e;white-space:nowrap;overflow:hidden;">۱۵۶,۸۴۸</div>
<div style="position:absolute;left:965px;top:781px;width:163px;height:24px;background:#eeeeee;text-align:center;box-sizing:border-box;line-height:24px;font-size:12.5px;font-weight:bold;color:#18485e;white-space:nowrap;overflow:hidden;">۱,۶۲۸,۴۶۱</div>
<div style="position:absolute;left:1128px;top:781px;width:316px;height:24px;background:#eeeeee;text-align:center;box-sizing:border-box;line-height:24px;font-size:12.5px;font-weight:bold;color:#18485e;white-space:nowrap;overflow:hidden;">۱۷۷,۱۶۴</div>
<div style="position:absolute;left:1444px;top:781px;width:140px;height:24px;background:#eeeeee;text-align:center;box-sizing:border-box;line-height:24px;font-size:12.5px;font-weight:bold;color:#18485e;white-space:nowrap;overflow:hidden;">۲۸,۱۴۹</div>
<div style="position:absolute;left:1584px;top:781px;width:301px;height:24px;background:#eeeeee;text-align:right;padding-right:3px;box-sizing:border-box;line-height:25px;font-size:12px;font-weight:normal;color:#24384a;white-space:nowrap;overflow:hidden;direction:rtl">هزینه تامین منابع مالی از محل تسهیلات بانکی</div>
<div style="position:absolute;left:35px;top:805px;width:126px;height:24px;background:#fde2a5;text-align:center;box-sizing:border-box;line-height:24px;font-size:12.5px;font-weight:bold;color:#18485e;white-space:nowrap;overflow:hidden;"><i class="z"></i></div>
<div style="position:absolute;left:161px;top:805px;width:113px;height:24px;background:#d7e6f5;text-align:center;box-sizing:border-box;line-height:24px;font-size:12.5px;font-weight:bold;color:#18485e;white-space:nowrap;overflow:hidden;"><i class="z"></i></div>
<div style="position:absolute;left:274px;top:805px;width:145px;height:24px;background:#d7e6f5;text-align:center;box-sizing:border-box;line-height:24px;font-size:12.5px;font-weight:bold;color:#18485e;white-space:nowrap;overflow:hidden;"><i class="z"></i></div>
<div style="position:absolute;left:419px;top:805px;width:163px;height:24px;background:#d7e6f5;text-align:center;box-sizing:border-box;line-height:24px;font-size:12.5px;font-weight:bold;color:#18485e;white-space:nowrap;overflow:hidden;"><i class="z"></i></div>
<div style="position:absolute;left:582px;top:805px;width:125px;height:24px;background:#fde2a5;text-align:center;box-sizing:border-box;line-height:24px;font-size:12.5px;font-weight:bold;color:#18485e;white-space:nowrap;overflow:hidden;"><i class="z"></i></div>
<div style="position:absolute;left:707px;top:805px;width:113px;height:24px;background:#d7e6f5;text-align:center;box-sizing:border-box;line-height:24px;font-size:12.5px;font-weight:bold;color:#18485e;white-space:nowrap;overflow:hidden;"><i class="z"></i></div>
<div style="position:absolute;left:820px;top:805px;width:145px;height:24px;background:#d7e6f5;text-align:center;box-sizing:border-box;line-height:24px;font-size:12.5px;font-weight:bold;color:#18485e;white-space:nowrap;overflow:hidden;"><i class="z"></i></div>
<div style="position:absolute;left:965px;top:805px;width:163px;height:24px;background:#d7e6f5;text-align:center;box-sizing:border-box;line-height:24px;font-size:12.5px;font-weight:bold;color:#18485e;white-space:nowrap;overflow:hidden;"><i class="z"></i></div>
<div style="position:absolute;left:1128px;top:805px;width:316px;height:24px;background:#d7e6f5;text-align:center;box-sizing:border-box;line-height:24px;font-size:12.5px;font-weight:bold;color:#18485e;white-space:nowrap;overflow:hidden;"><i class="z"></i></div>
<div style="position:absolute;left:1444px;top:805px;width:140px;height:24px;background:#d7e6f5;text-align:center;box-sizing:border-box;line-height:24px;font-size:12.5px;font-weight:bold;color:#18485e;white-space:nowrap;overflow:hidden;"><i class="z"></i></div>
<div style="position:absolute;left:1584px;top:805px;width:301px;height:24px;background:#d7e6f5;text-align:right;padding-right:3px;box-sizing:border-box;line-height:25px;font-size:12px;font-weight:normal;color:#24384a;white-space:nowrap;overflow:hidden;direction:rtl">هزینه تامین منابع مالی از محل اوراق مشارکت و صکوک</div>
<div style="position:absolute;left:35px;top:829px;width:126px;height:24px;background:#fde2a5;text-align:center;box-sizing:border-box;line-height:24px;font-size:12.5px;font-weight:bold;color:#18485e;white-space:nowrap;overflow:hidden;"><i class="z"></i></div>
<div style="position:absolute;left:161px;top:829px;width:113px;height:24px;background:#eeeeee;text-align:center;box-sizing:border-box;line-height:24px;font-size:12.5px;font-weight:bold;color:#18485e;white-space:nowrap;overflow:hidden;"><i class="z"></i></div>
<div style="position:absolute;left:274px;top:829px;width:145px;height:24px;background:#eeeeee;text-align:center;box-sizing:border-box;line-height:24px;font-size:12.5px;font-weight:bold;color:#18485e;white-space:nowrap;overflow:hidden;"><i class="z"></i></div>
<div style="position:absolute;left:419px;top:829px;width:163px;height:24px;background:#eeeeee;text-align:center;box-sizing:border-box;line-height:24px;font-size:12.5px;font-weight:bold;color:#18485e;white-space:nowrap;overflow:hidden;"><i class="z"></i></div>
<div style="position:absolute;left:582px;top:829px;width:125px;height:24px;background:#fde2a5;text-align:center;box-sizing:border-box;line-height:24px;font-size:12.5px;font-weight:bold;color:#18485e;white-space:nowrap;overflow:hidden;"><i class="z"></i></div>
<div style="position:absolute;left:707px;top:829px;width:113px;height:24px;background:#eeeeee;text-align:center;box-sizing:border-box;line-height:24px;font-size:12.5px;font-weight:bold;color:#18485e;white-space:nowrap;overflow:hidden;"><i class="z"></i></div>
<div style="position:absolute;left:820px;top:829px;width:145px;height:24px;background:#eeeeee;text-align:center;box-sizing:border-box;line-height:24px;font-size:12.5px;font-weight:bold;color:#18485e;white-space:nowrap;overflow:hidden;"><i class="z"></i></div>
<div style="position:absolute;left:965px;top:829px;width:163px;height:24px;background:#eeeeee;text-align:center;box-sizing:border-box;line-height:24px;font-size:12.5px;font-weight:bold;color:#18485e;white-space:nowrap;overflow:hidden;"><i class="z"></i></div>
<div style="position:absolute;left:1128px;top:829px;width:316px;height:24px;background:#eeeeee;text-align:center;box-sizing:border-box;line-height:24px;font-size:12.5px;font-weight:bold;color:#18485e;white-space:nowrap;overflow:hidden;"><i class="z"></i></div>
<div style="position:absolute;left:1444px;top:829px;width:140px;height:24px;background:#eeeeee;text-align:center;box-sizing:border-box;line-height:24px;font-size:12.5px;font-weight:bold;color:#18485e;white-space:nowrap;overflow:hidden;"><i class="z"></i></div>
<div style="position:absolute;left:1584px;top:829px;width:301px;height:24px;background:#eeeeee;text-align:right;padding-right:3px;box-sizing:border-box;line-height:25px;font-size:12px;font-weight:normal;color:#24384a;white-space:nowrap;overflow:hidden;direction:rtl">هزینه تامین منابع مالی از محل وجوه دریافتی از مشتریان</div>
<div style="position:absolute;left:35px;top:853px;width:126px;height:24px;background:#fde2a5;text-align:center;box-sizing:border-box;line-height:24px;font-size:12.5px;font-weight:bold;color:#18485e;white-space:nowrap;overflow:hidden;"><i class="z"></i></div>
<div style="position:absolute;left:161px;top:853px;width:113px;height:24px;background:#d7e6f5;text-align:center;box-sizing:border-box;line-height:24px;font-size:12.5px;font-weight:bold;color:#18485e;white-space:nowrap;overflow:hidden;"><i class="z"></i></div>
<div style="position:absolute;left:274px;top:853px;width:145px;height:24px;background:#d7e6f5;text-align:center;box-sizing:border-box;line-height:24px;font-size:12.5px;font-weight:bold;color:#18485e;white-space:nowrap;overflow:hidden;"><i class="z"></i></div>
<div style="position:absolute;left:419px;top:853px;width:163px;height:24px;background:#d7e6f5;text-align:center;box-sizing:border-box;line-height:24px;font-size:12.5px;font-weight:bold;color:#18485e;white-space:nowrap;overflow:hidden;"><i class="z"></i></div>
<div style="position:absolute;left:582px;top:853px;width:125px;height:24px;background:#fde2a5;text-align:center;box-sizing:border-box;line-height:24px;font-size:12.5px;font-weight:bold;color:#18485e;white-space:nowrap;overflow:hidden;"><i class="z"></i></div>
<div style="position:absolute;left:707px;top:853px;width:113px;height:24px;background:#d7e6f5;text-align:center;box-sizing:border-box;line-height:24px;font-size:12.5px;font-weight:bold;color:#18485e;white-space:nowrap;overflow:hidden;"><i class="z"></i></div>
<div style="position:absolute;left:820px;top:853px;width:145px;height:24px;background:#d7e6f5;text-align:center;box-sizing:border-box;line-height:24px;font-size:12.5px;font-weight:bold;color:#18485e;white-space:nowrap;overflow:hidden;"><i class="z"></i></div>
<div style="position:absolute;left:965px;top:853px;width:163px;height:24px;background:#d7e6f5;text-align:center;box-sizing:border-box;line-height:24px;font-size:12.5px;font-weight:bold;color:#18485e;white-space:nowrap;overflow:hidden;"><i class="z"></i></div>
<div style="position:absolute;left:1128px;top:853px;width:316px;height:24px;background:#d7e6f5;text-align:center;box-sizing:border-box;line-height:24px;font-size:12.5px;font-weight:bold;color:#18485e;white-space:nowrap;overflow:hidden;"><i class="z"></i></div>
<div style="position:absolute;left:1444px;top:853px;width:140px;height:24px;background:#d7e6f5;text-align:center;box-sizing:border-box;line-height:24px;font-size:12.5px;font-weight:bold;color:#18485e;white-space:nowrap;overflow:hidden;"><i class="z"></i></div>
<div style="position:absolute;left:1584px;top:853px;width:301px;height:24px;background:#d7e6f5;text-align:right;padding-right:3px;box-sizing:border-box;line-height:25px;font-size:12px;font-weight:normal;color:#24384a;white-space:nowrap;overflow:hidden;direction:rtl">هزینه تامین منابع مالی از محل سایر منابع</div>
<div style="position:absolute;left:35px;top:877px;width:126px;height:25px;background:#fde2a5;text-align:center;box-sizing:border-box;line-height:25px;font-size:12.5px;font-weight:bold;color:#18485e;white-space:nowrap;overflow:hidden;">۱,۱۳۴,۵۱۲</div>
<div style="position:absolute;left:161px;top:877px;width:113px;height:25px;background:#fde2a5;text-align:center;box-sizing:border-box;line-height:25px;font-size:12.5px;font-weight:bold;color:#18485e;white-space:nowrap;overflow:hidden;">۲<i class="z"></i><i class="z"></i>,۲۴<i class="z"></i></div>
<div style="position:absolute;left:274px;top:877px;width:145px;height:25px;background:#fde2a5;text-align:center;box-sizing:border-box;line-height:25px;font-size:12.5px;font-weight:bold;color:#18485e;white-space:nowrap;overflow:hidden;">۱۲۸,۶۹۹</div>
<div style="position:absolute;left:419px;top:877px;width:163px;height:25px;background:#fde2a5;text-align:center;box-sizing:border-box;line-height:25px;font-size:12.5px;font-weight:bold;color:#18485e;white-space:nowrap;overflow:hidden;">۱,۴۶۳,۴۵۱</div>
<div style="position:absolute;left:582px;top:877px;width:125px;height:25px;background:#fde2a5;text-align:center;box-sizing:border-box;line-height:25px;font-size:12.5px;font-weight:bold;color:#18485e;white-space:nowrap;overflow:hidden;">۱,۲۷۱,۳۷۳</div>
<div style="position:absolute;left:707px;top:877px;width:113px;height:25px;background:#fde2a5;text-align:center;box-sizing:border-box;line-height:25px;font-size:12.5px;font-weight:bold;color:#18485e;white-space:nowrap;overflow:hidden;">۲<i class="z"></i><i class="z"></i>,۲۴<i class="z"></i></div>
<div style="position:absolute;left:820px;top:877px;width:145px;height:25px;background:#fde2a5;text-align:center;box-sizing:border-box;line-height:25px;font-size:12.5px;font-weight:bold;color:#18485e;white-space:nowrap;overflow:hidden;">۱۵۶,۸۴۸</div>
<div style="position:absolute;left:965px;top:877px;width:163px;height:25px;background:#fde2a5;text-align:center;box-sizing:border-box;line-height:25px;font-size:12.5px;font-weight:bold;color:#18485e;white-space:nowrap;overflow:hidden;">۱,۶۲۸,۴۶۱</div>
<div style="position:absolute;left:1128px;top:877px;width:316px;height:25px;background:#fde2a5;text-align:center;box-sizing:border-box;line-height:25px;font-size:12.5px;font-weight:bold;color:#18485e;white-space:nowrap;overflow:hidden;">۱۷۷,۱۶۴</div>
<div style="position:absolute;left:1444px;top:877px;width:140px;height:25px;background:#fde2a5;text-align:center;box-sizing:border-box;line-height:25px;font-size:12.5px;font-weight:bold;color:#18485e;white-space:nowrap;overflow:hidden;">۲۸,۱۴۹</div>
<div style="position:absolute;left:1584px;top:877px;width:301px;height:25px;background:#fde2a5;text-align:right;padding-right:3px;box-sizing:border-box;line-height:26px;font-size:12px;font-weight:normal;color:#24384a;white-space:nowrap;overflow:hidden;direction:rtl">جمع</div>
<div style="position:absolute;left:35px;top:805px;width:1850px;height:1px;background:#b4b9bd"></div>
<div style="position:absolute;left:35px;top:829px;width:1850px;height:1px;background:#b4b9bd"></div>
<div style="position:absolute;left:35px;top:853px;width:1850px;height:1px;background:#b4b9bd"></div>
<div style="position:absolute;left:35px;top:877px;width:1850px;height:1px;background:#b4b9bd"></div>
<div style="position:absolute;left:35px;top:902px;width:1850px;height:1px;background:#b4b9bd"></div>
<div style="position:absolute;left:35px;top:781px;width:1850px;height:1px;background:#b4b9bd"></div>
<div style="position:absolute;left:161px;top:781px;width:1px;height:121px;background:#b4b9bd"></div>
<div style="position:absolute;left:274px;top:781px;width:1px;height:121px;background:#b4b9bd"></div>
<div style="position:absolute;left:419px;top:781px;width:1px;height:121px;background:#b4b9bd"></div>
<div style="position:absolute;left:582px;top:781px;width:1px;height:121px;background:#b4b9bd"></div>
<div style="position:absolute;left:707px;top:781px;width:1px;height:121px;background:#b4b9bd"></div>
<div style="position:absolute;left:820px;top:781px;width:1px;height:121px;background:#b4b9bd"></div>
<div style="position:absolute;left:965px;top:781px;width:1px;height:121px;background:#b4b9bd"></div>
<div style="position:absolute;left:1128px;top:781px;width:1px;height:121px;background:#b4b9bd"></div>
<div style="position:absolute;left:1444px;top:781px;width:1px;height:121px;background:#b4b9bd"></div>
<div style="position:absolute;left:1584px;top:781px;width:1px;height:121px;background:#b4b9bd"></div>
<div style="position:absolute;left:35px;top:781px;width:1px;height:122px;background:#b4b9bd"></div>
<div style="position:absolute;left:1884px;top:781px;width:1px;height:122px;background:#b4b9bd"></div>
<div style="position:absolute;left:1544px;top:1000px;width:341px;height:71px;background:#0096c9;text-align:center;box-sizing:border-box;line-height:71px;font-size:11px;font-weight:normal;color:#24384a;white-space:nowrap;overflow:hidden;"></div>
<div dir="rtl" style="position:absolute;left:1544px;width:341px;top:1000px;line-height:24px;text-align:center;font-size:11.7px;font-weight:bold;color:#fff">شرح</div>
<div style="position:absolute;left:1221px;top:1000px;width:323px;height:47px;background:#0096c9;text-align:center;box-sizing:border-box;line-height:47px;font-size:11px;font-weight:normal;color:#24384a;white-space:nowrap;overflow:hidden;"></div>
<div dir="rtl" style="position:absolute;left:1221px;width:323px;top:1000px;line-height:24px;text-align:center;font-size:11.7px;font-weight:bold;color:#fff">مانده ابتدای ماه</div>
<div style="position:absolute;left:358px;top:1000px;width:863px;height:24px;background:#0096c9;text-align:center;box-sizing:border-box;line-height:24px;font-size:11.7px;font-weight:bold;color:#fff;white-space:nowrap;overflow:hidden;">طی ماه</div>
<div style="position:absolute;left:784px;top:1024px;width:437px;height:23px;background:#0096c9;text-align:center;box-sizing:border-box;line-height:23px;font-size:11.7px;font-weight:bold;color:#fff;white-space:nowrap;overflow:hidden;">تسهیلات اعطایی طی ماه</div>
<div style="position:absolute;left:358px;top:1024px;width:426px;height:23px;background:#0096c9;text-align:center;box-sizing:border-box;line-height:23px;font-size:11.7px;font-weight:bold;color:#fff;white-space:nowrap;overflow:hidden;">تسهیلات وصول شده طی ماه</div>
<div style="position:absolute;left:35px;top:1000px;width:323px;height:47px;background:#0096c9;text-align:center;box-sizing:border-box;line-height:47px;font-size:11px;font-weight:normal;color:#24384a;white-space:nowrap;overflow:hidden;"></div>
<div dir="rtl" style="position:absolute;left:35px;width:323px;top:1000px;line-height:24px;text-align:center;font-size:11.7px;font-weight:bold;color:#fff">مانده پایان ماه</div>
<div style="position:absolute;left:35px;top:1047px;width:208px;height:24px;background:#0096c9;text-align:center;box-sizing:border-box;line-height:24px;font-size:11.7px;font-weight:bold;color:#fff;white-space:nowrap;overflow:hidden;">اصل و فرع تسهیلات اعطایی</div>
<div style="position:absolute;left:243px;top:1047px;width:115px;height:24px;background:#0096c9;text-align:center;box-sizing:border-box;line-height:24px;font-size:11.7px;font-weight:bold;color:#fff;white-space:nowrap;overflow:hidden;">تعداد تسهیلات</div>
<div style="position:absolute;left:358px;top:1047px;width:226px;height:24px;background:#0096c9;text-align:center;box-sizing:border-box;line-height:24px;font-size:11.7px;font-weight:bold;color:#fff;white-space:nowrap;overflow:hidden;">مبلغ اصل و فرع اقساط وصولی</div>
<div style="position:absolute;left:584px;top:1047px;width:200px;height:24px;background:#0096c9;text-align:center;box-sizing:border-box;line-height:24px;font-size:11.7px;font-weight:bold;color:#fff;white-space:nowrap;overflow:hidden;">تعداد تسهیلات تسویه شده</div>
<div style="position:absolute;left:784px;top:1047px;width:245px;height:24px;background:#0096c9;text-align:center;box-sizing:border-box;line-height:24px;font-size:11.7px;font-weight:bold;color:#fff;white-space:nowrap;overflow:hidden;">مبلغ اصل و فرع تسهیلات اعطایی</div>
<div style="position:absolute;left:1029px;top:1047px;width:192px;height:24px;background:#0096c9;text-align:center;box-sizing:border-box;line-height:24px;font-size:11.7px;font-weight:bold;color:#fff;white-space:nowrap;overflow:hidden;">تعداد تسهیلات ایجاد شده</div>
<div style="position:absolute;left:1221px;top:1047px;width:208px;height:24px;background:#0096c9;text-align:center;box-sizing:border-box;line-height:24px;font-size:11.7px;font-weight:bold;color:#fff;white-space:nowrap;overflow:hidden;">اصل و فرع تسهیلات اعطایی</div>
<div style="position:absolute;left:1429px;top:1047px;width:115px;height:24px;background:#0096c9;text-align:center;box-sizing:border-box;line-height:24px;font-size:11.7px;font-weight:bold;color:#fff;white-space:nowrap;overflow:hidden;">تعداد تسهیلات</div>
<div style="position:absolute;left:358px;top:1024px;width:863px;height:1px;background:#8cd6f2"></div>
<div style="position:absolute;left:35px;top:1047px;width:1509px;height:1px;background:#8cd6f2"></div>
<div style="position:absolute;left:1544px;top:1000px;width:1px;height:71px;background:#8cd6f2"></div>
<div style="position:absolute;left:1221px;top:1000px;width:1px;height:71px;background:#8cd6f2"></div>
<div style="position:absolute;left:358px;top:1000px;width:1px;height:71px;background:#8cd6f2"></div>
<div style="position:absolute;left:784px;top:1024px;width:1px;height:47px;background:#8cd6f2"></div>
<div style="position:absolute;left:243px;top:1047px;width:1px;height:24px;background:#8cd6f2"></div>
<div style="position:absolute;left:358px;top:1047px;width:1px;height:24px;background:#8cd6f2"></div>
<div style="position:absolute;left:584px;top:1047px;width:1px;height:24px;background:#8cd6f2"></div>
<div style="position:absolute;left:784px;top:1047px;width:1px;height:24px;background:#8cd6f2"></div>
<div style="position:absolute;left:1029px;top:1047px;width:1px;height:24px;background:#8cd6f2"></div>
<div style="position:absolute;left:1221px;top:1047px;width:1px;height:24px;background:#8cd6f2"></div>
<div style="position:absolute;left:1429px;top:1047px;width:1px;height:24px;background:#8cd6f2"></div>
<div style="position:absolute;left:35px;top:1071px;width:208px;height:24px;background:#fde2a5;text-align:center;box-sizing:border-box;line-height:24px;font-size:12.5px;font-weight:bold;color:#18485e;white-space:nowrap;overflow:hidden;">۵۳۱</div>
<div style="position:absolute;left:243px;top:1071px;width:115px;height:24px;background:#fde2a5;text-align:center;box-sizing:border-box;line-height:24px;font-size:12.5px;font-weight:bold;color:#18485e;white-space:nowrap;overflow:hidden;">۰</div>
<div style="position:absolute;left:358px;top:1071px;width:226px;height:24px;background:#eeeeee;text-align:center;box-sizing:border-box;line-height:24px;font-size:12.5px;font-weight:bold;color:#18485e;white-space:nowrap;overflow:hidden;">۳۱۴</div>
<div style="position:absolute;left:584px;top:1071px;width:200px;height:24px;background:#eeeeee;text-align:center;box-sizing:border-box;line-height:24px;font-size:12.5px;font-weight:bold;color:#18485e;white-space:nowrap;overflow:hidden;">۰</div>
<div style="position:absolute;left:784px;top:1071px;width:245px;height:24px;background:#eeeeee;text-align:center;box-sizing:border-box;line-height:24px;font-size:12.5px;font-weight:bold;color:#18485e;white-space:nowrap;overflow:hidden;">۴۲</div>
<div style="position:absolute;left:1029px;top:1071px;width:192px;height:24px;background:#eeeeee;text-align:center;box-sizing:border-box;line-height:24px;font-size:12.5px;font-weight:bold;color:#18485e;white-space:nowrap;overflow:hidden;">۱۶</div>
<div style="position:absolute;left:1221px;top:1071px;width:208px;height:24px;background:#eeeeee;text-align:center;box-sizing:border-box;line-height:24px;font-size:12.5px;font-weight:bold;color:#18485e;white-space:nowrap;overflow:hidden;">۱۱۱,۱۱۱</div>
<div style="position:absolute;left:1429px;top:1071px;width:115px;height:24px;background:#eeeeee;text-align:center;box-sizing:border-box;line-height:24px;font-size:12.5px;font-weight:bold;color:#18485e;white-space:nowrap;overflow:hidden;">۵۳۱</div>
<div style="position:absolute;left:1544px;top:1071px;width:341px;height:24px;background:#eeeeee;text-align:right;padding-right:3px;box-sizing:border-box;line-height:24px;font-size:12px;font-weight:normal;color:#24384a;white-space:nowrap;overflow:hidden;direction:rtl">مانده اقساط قراردادهای لیزینگ واگذار شده</div>
<div style="position:absolute;left:35px;top:1071px;width:1850px;height:1px;background:#b4b9bd"></div>
<div style="position:absolute;left:243px;top:1071px;width:1px;height:24px;background:#b4b9bd"></div>
<div style="position:absolute;left:358px;top:1071px;width:1px;height:24px;background:#b4b9bd"></div>
<div style="position:absolute;left:584px;top:1071px;width:1px;height:24px;background:#b4b9bd"></div>
<div style="position:absolute;left:784px;top:1071px;width:1px;height:24px;background:#b4b9bd"></div>
<div style="position:absolute;left:1029px;top:1071px;width:1px;height:24px;background:#b4b9bd"></div>
<div style="position:absolute;left:1221px;top:1071px;width:1px;height:24px;background:#b4b9bd"></div>
<div style="position:absolute;left:1429px;top:1071px;width:1px;height:24px;background:#b4b9bd"></div>
<div style="position:absolute;left:1544px;top:1071px;width:1px;height:24px;background:#b4b9bd"></div>
<div style="position:absolute;left:35px;top:1071px;width:1px;height:24px;background:#b4b9bd"></div>
<div style="position:absolute;left:1884px;top:1071px;width:1px;height:24px;background:#b4b9bd"></div>
<div style="position:absolute;left:555px;top:475px;width:800px;text-align:center;font-size:91px;font-weight:bold;color:rgba(0,0,0,0.052);transform:rotate(-45deg);white-space:nowrap;line-height:130px;pointer-events:none">@Codal360_ir</div>
</body></html>
